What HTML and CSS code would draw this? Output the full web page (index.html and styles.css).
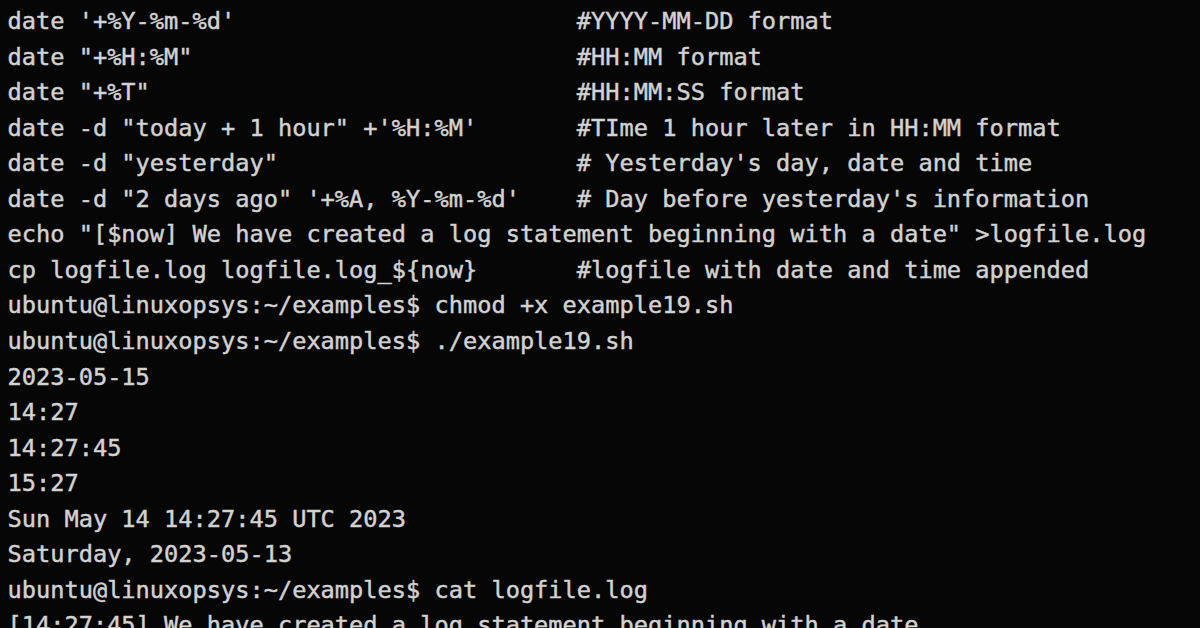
FILE: index.html
```html
<!DOCTYPE html>
<html lang="en">
<head>
<meta charset="utf-8">
<title>Terminal</title>
<link rel="stylesheet" href="styles.css">
</head>
<body>
<main class="terminal">
<div class="line">                                        #Storing today's date</div>
<div class="line">date '+%Y-%m-%d'                        #YYYY-MM-DD format</div>
<div class="line">date "+%H:%M"                           #HH:MM format</div>
<div class="line">date "+%T"                              #HH:MM:SS format</div>
<div class="line">date -d "today + 1 hour" +'%H:%M'       #TIme 1 hour later in HH:MM format</div>
<div class="line">date -d "yesterday"                     # Yesterday's day, date and time</div>
<div class="line">date -d "2 days ago" '+%A, %Y-%m-%d'    # Day before yesterday's information</div>
<div class="line">echo "[$now] We have created a log statement beginning with a date" &gt;logfile.log</div>
<div class="line">cp logfile.log logfile.log_${now}       #logfile with date and time appended</div>
<div class="line">ubuntu@linuxopsys:~/examples$ chmod +x example19.sh</div>
<div class="line">ubuntu@linuxopsys:~/examples$ ./example19.sh</div>
<div class="line">2023-05-15</div>
<div class="line">14:27</div>
<div class="line">14:27:45</div>
<div class="line">15:27</div>
<div class="line">Sun May 14 14:27:45 UTC 2023</div>
<div class="line">Saturday, 2023-05-13</div>
<div class="line">ubuntu@linuxopsys:~/examples$ cat logfile.log</div>
<div class="line">[14:27:45] We have created a log statement beginning with a date</div>
</main>
</body>
</html>
```
FILE: styles.css
```css
html, body {
  margin: 0;
  padding: 0;
  background: #060606;
  width: 1200px;
  height: 628px;
  overflow: hidden;
}

.terminal {
  display: flex;
  flex-direction: column;
  margin-top: -31.5px;
  padding-left: 7.5px;
  font-family: "DejaVu Sans Mono", "Liberation Mono", monospace;
  font-size: 23.65px;
  line-height: 35.56px;
  color: #d2d2d2;
  -webkit-text-stroke: 0.45px #d2d2d2;
}

.line {
  white-space: pre;
  height: 35.56px;
}
```
